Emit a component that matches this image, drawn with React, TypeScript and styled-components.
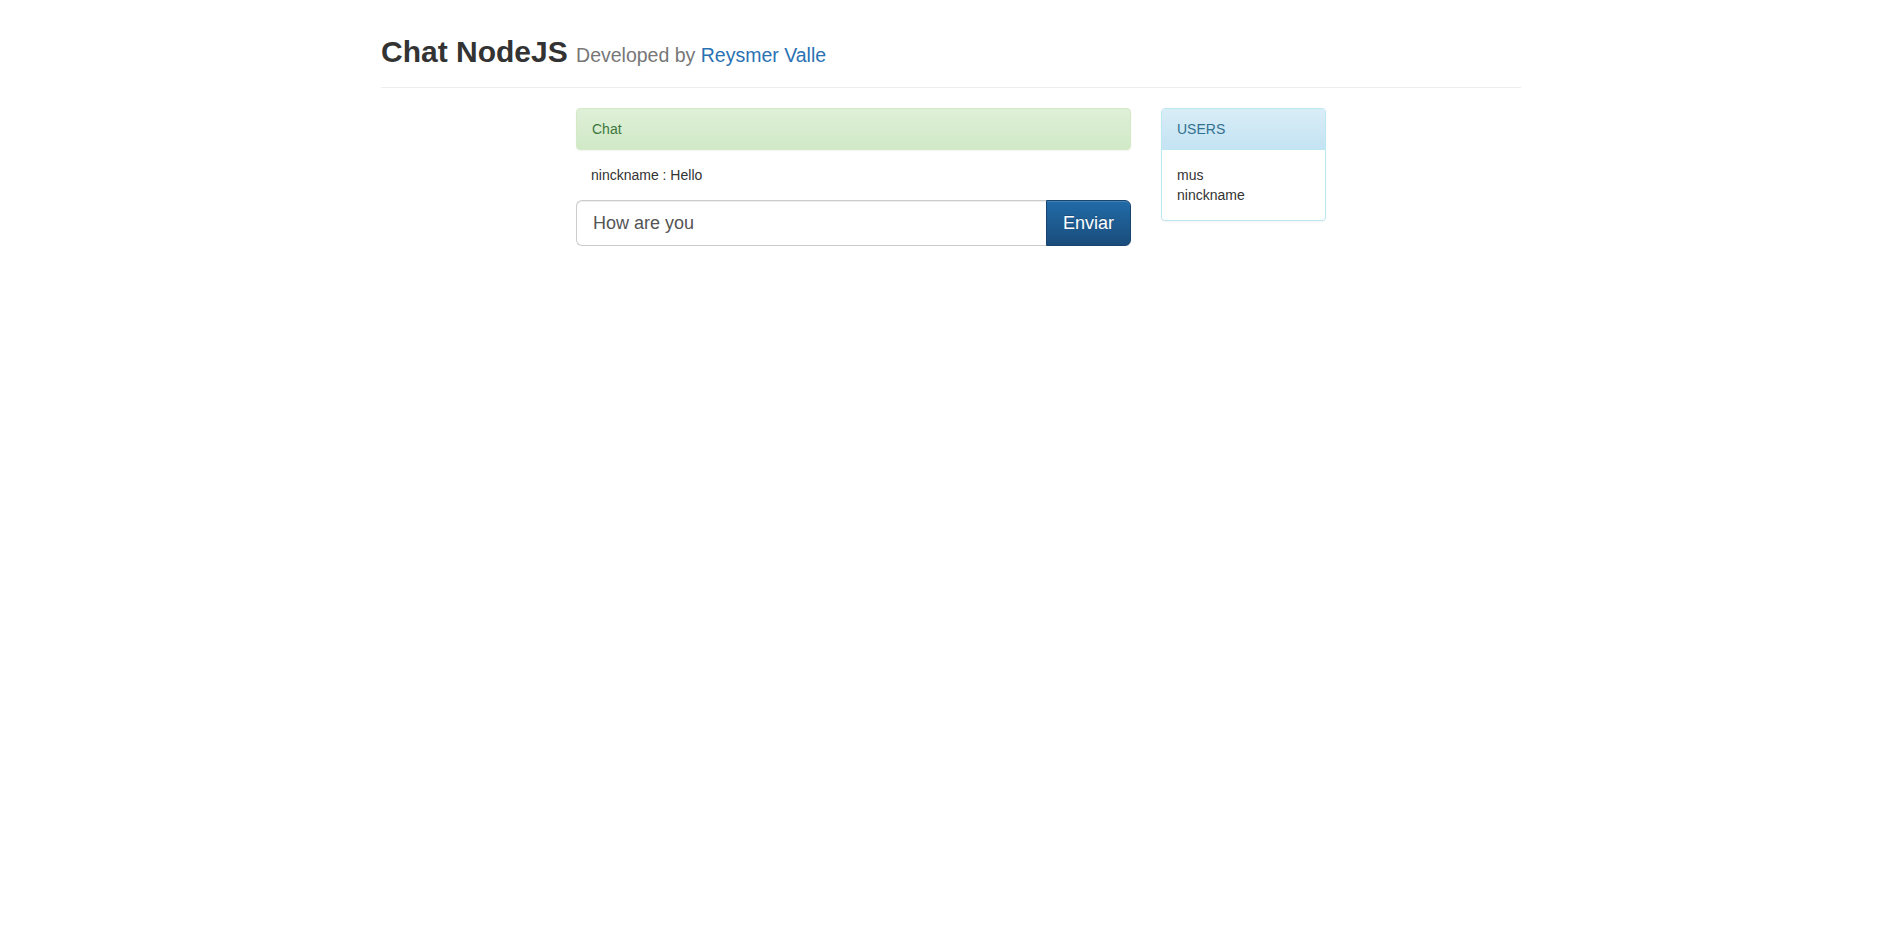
import React from "react";
import styled, { createGlobalStyle } from "styled-components";

const GlobalStyle = createGlobalStyle`
  * { box-sizing: border-box; }
  html, body { margin: 0; padding: 0; background: #fff; }
  body {
    font-family: "Liberation Sans", Arial, Helvetica, sans-serif;
    font-size: 14px;
    line-height: 1.42857143;
    color: #333;
  }
`;

const Container = styled.div`
  width: 1170px;
  margin: 0 auto;
  padding: 0 15px;
`;

const PageHeader = styled.div`
  margin: 35px 0 20px;
  padding-bottom: 9px;
  border-bottom: 1px solid #eee;
`;

const Title = styled.h2`
  margin: 0 0 10px;
  font-size: 30px;
  line-height: 1.1;
  font-weight: bold;
  color: #333;
`;

const Small = styled.small`
  font-size: 65%;
  font-weight: normal;
  line-height: 1;
  color: #777;
`;

const Link = styled.a`
  color: #2a72b3;
  text-decoration: none;
`;

const Row = styled.div`
  display: flex;
  margin: 0 -15px;
`;

const Col = styled.div<{ $span: number; $offset?: number }>`
  width: ${(p) => (p.$span / 12) * 100}%;
  margin-left: ${(p) => ((p.$offset ?? 0) / 12) * 100}%;
  padding: 0 15px;
`;

const Heading = styled.div<{ $variant: "success" | "info" }>`
  padding: 10px 15px;
  color: ${(p) => (p.$variant === "success" ? "#3c763d" : "#31708f")};
  background-image: ${(p) =>
    p.$variant === "success"
      ? "linear-gradient(to bottom, #dff0d8 0, #d0e9c6 100%)"
      : "linear-gradient(to bottom, #d9edf7 0, #c4e3f3 100%)"};
`;

const ChatHeading = styled(Heading)`
  border: 1px solid #d6e9c6;
  border-radius: 4px;
  box-shadow: 0 1px 2px rgba(0, 0, 0, 0.05);
`;

const Messages = styled.div`
  padding: 15px;
`;

const Message = styled.div`
  color: #333;
`;

const InputGroup = styled.form`
  display: flex;
  margin: 0;
`;

const Input = styled.input`
  flex: 1;
  min-width: 0;
  height: 46px;
  padding: 10px 16px;
  font-family: inherit;
  font-size: 18px;
  line-height: 1.3333333;
  color: #555;
  background: #fff;
  border: 1px solid #ccc;
  border-right: none;
  border-radius: 6px 0 0 6px;
  box-shadow: inset 0 1px 1px rgba(0, 0, 0, 0.075);
  outline: none;
`;

const SendButton = styled.button`
  height: 46px;
  padding: 10px 16px;
  font-family: inherit;
  font-size: 18px;
  line-height: 1.3333333;
  color: #fff;
  background-image: linear-gradient(to bottom, #216ba8 0, #1a4c7b 100%);
  border: 1px solid #17456f;
  border-radius: 0 6px 6px 0;
  text-shadow: 0 -1px 0 rgba(0, 0, 0, 0.2);
  box-shadow: inset 0 1px 0 rgba(255, 255, 255, 0.15), 0 1px 1px rgba(0, 0, 0, 0.075);
  cursor: pointer;
`;

const Panel = styled.div`
  border: 1px solid #bce8f1;
  border-radius: 4px;
  background: #fff;
  box-shadow: 0 1px 2px rgba(0, 0, 0, 0.05);
  overflow: hidden;
`;

const InfoHeading = styled(Heading)`
  border-bottom: 1px solid #bce8f1;
`;

const PanelBody = styled.div`
  padding: 15px;
`;

const UserItem = styled.div``;

export default function App() {
  const users = ["mus", "ninckname"];
  return (
    <>
      <GlobalStyle />
      <Container>
        <PageHeader>
          <Title>
            Chat NodeJS{" "}
            <Small>
              Developed by <Link href="#">Reysmer Valle</Link>
            </Small>
          </Title>
        </PageHeader>
        <Row>
          <Col $span={6} $offset={2}>
            <ChatHeading $variant="success">Chat</ChatHeading>
            <Messages>
              <Message>ninckname : Hello</Message>
            </Messages>
            <InputGroup onSubmit={(e) => e.preventDefault()}>
              <Input defaultValue="How are you" />
              <SendButton type="submit">Enviar</SendButton>
            </InputGroup>
          </Col>
          <Col $span={2}>
            <Panel>
              <InfoHeading $variant="info">USERS</InfoHeading>
              <PanelBody>
                {users.map((u) => (
                  <UserItem key={u}>{u}</UserItem>
                ))}
              </PanelBody>
            </Panel>
          </Col>
        </Row>
      </Container>
    </>
  );
}
